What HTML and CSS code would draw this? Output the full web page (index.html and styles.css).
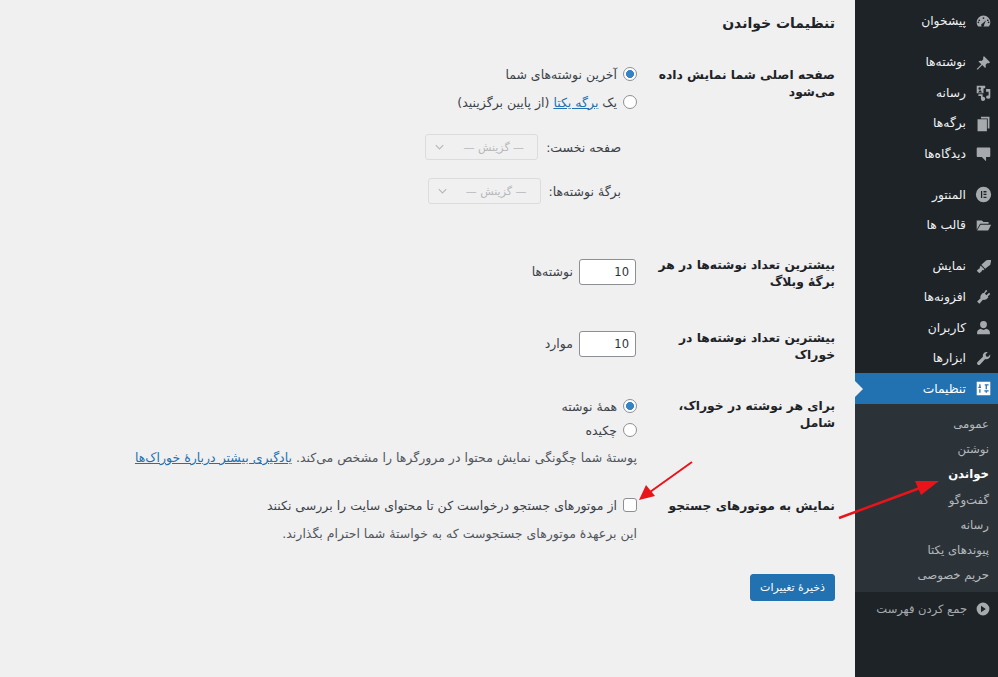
FILE: index.html
```html
<!DOCTYPE html>
<html lang="fa" dir="rtl">
<head>
<meta charset="utf-8">
<title>تنظیمات خواندن</title>
<link rel="stylesheet" href="styles.css">
</head>
<body>
<div class="admin">
  <nav class="side">
    <ul class="menu">
      <li class="item"><svg class="ic" viewBox="0 0 20 20"><path d="M10 3a8 8 0 0 0-8 8c0 2 .7 3.800 2 5h12c1.300-1.200 2-3 2-5a8 8 0 0 0-8-8zm0 2a1 1 0 1 1 0 2 1 1 0 0 1 0-2zM5 7.500a1 1 0 1 1 0 2 1 1 0 0 1 0-2zm10 0a1 1 0 1 1 0 2 1 1 0 0 1 0-2zM4 12a1 1 0 1 1 0-2 1 1 0 0 1 0 2zm12 0a1 1 0 1 1 0-2 1 1 0 0 1 0 2zm-5.200 1.600a1.800 1.800 0 1 1-2-1.200L13 8.500z"/></svg><span>پیشخوان</span></li>
      <li class="item gap"><svg class="ic" viewBox="0 0 20 20"><path d="M10.400 2.300 17.700 9.600 16.300 11c-.7-.3-1.500-.3-2.100 0l-1.800 1.800c.6 1.300.4 2.700-.5 3.700L8.600 13 3 18.500l-1-.9L7.500 12 4 8.700c1-.9 2.400-1.100 3.700-.5l1.800-1.800c.3-.6.300-1.400 0-2.100z"/></svg><span>نوشته‌ها</span></li>
      <li class="item"><svg class="ic" viewBox="0 0 20 20"><path d="M2 2h10v3h-2v6H2zm3.500 1.800a1.500 1.500 0 1 0 0 3 1.500 1.500 0 0 0 0-3zM3.500 10h5L6 7zM13 6h5v9.500a2.500 2 0 1 1-2-2V9h-3zM4 12h5v3a2.500 2.500 0 1 1-2 2.500V14H4z"/></svg><span>رسانه</span></li>
      <li class="item"><svg class="ic" viewBox="0 0 20 20"><path d="M7 2h10v14h-2V4H7zM3 5h11v14H3z"/></svg><span>برگه‌ها</span></li>
      <li class="item"><svg class="ic" viewBox="0 0 20 20"><path d="M3 3h14a1 1 0 0 1 1 1v9a1 1 0 0 1-1 1h-4v5l-5-5H3a1 1 0 0 1-1-1V4a1 1 0 0 1 1-1z"/></svg><span>دیدگاه‌ها</span></li>
      <li class="item gap"><svg class="ic" viewBox="0 0 20 20"><path fill-rule="evenodd" d="M10 1a9 9 0 1 0 0 18 9 9 0 0 0 0-18zM7 6h1.500v8H7zm3 0h3.500v1.500H10zm0 3.200h3.500v1.500H10zm0 3.300h3.500V14H10z"/></svg><span>المنتور</span></li>
      <li class="item"><svg class="ic" viewBox="0 0 20 20"><path d="M2 4h6l2 2h6v2H6l-4 7zM6.500 9H19l-3.500 7H2.500z"/></svg><span>قالب ها</span></li>
      <li class="item gap"><svg class="ic" viewBox="0 0 20 20"><path d="M19 2.500 18 8l-6 4.500L7.500 8 13 3c2-.6 4-.7 6-.5zM6.800 9l4.300 4.300-1.300 1.200-1.300-.5-.6 1.500L5.200 18l-3.200-3 2.500-2.500 1.500-.6-.5-1.300z"/></svg><span>نمایش</span></li>
      <li class="item"><svg class="ic" viewBox="0 0 20 20"><path d="M13 2l1.500 1.500-3 3 2 2 3-3L18 7l-3 3 .8.800-1.500 1.500c-1.500 1.500-3.500 2-5 1.500L6 17.500 5 18.500 2.500 16l4-4c-.5-1.500 0-3.500 1.500-5L9.500 5.500l.8.800z"/></svg><span>افزونه‌ها</span></li>
      <li class="item"><svg class="ic" viewBox="0 0 20 20"><path d="M10 2.500a4 4 0 0 1 4 4.200c0 2.300-1.800 4.300-4 4.300S6 9 6 6.700a4 4 0 0 1 4-4.200zM2.500 18v-2.500c0-2 2-3.300 4.500-4 1 1 2 1.300 3 1.300s2-.3 3-1.300c2.500.7 4.500 2 4.500 4V18z"/></svg><span>کاربران</span></li>
      <li class="item"><svg class="ic" viewBox="0 0 20 20"><path d="M18 6.500a4.500 4.500 0 0 1-6 4.200L6 17a2 2 0 0 1-3-3l6.300-6a4.500 4.500 0 0 1 5.700-5.500L12.500 5l.5 2.500 2.500.5L17.800 5.300c.1.400.2.800.2 1.200z"/></svg><span>ابزارها</span></li>
      <li class="item active"><svg class="ic" viewBox="0 0 20 20"><path fill-rule="evenodd" d="M2 2h16v16H2zM5 5v3H4v1.500h3V8H6.500V5zm6.500 0v1.500h1V11h1.500V6.500h2V5zM5 11v4h1.500v-4zm6 1v1.500h1.500V15H14v-1.500h2V12z"/></svg><span>تنظیمات</span></li>
    </ul>
    <ul class="sub">
      <li>عمومی</li>
      <li>نوشتن</li>
      <li class="on">خواندن</li>
      <li>گفت‌وگو</li>
      <li>رسانه</li>
      <li>پیوندهای یکتا</li>
      <li>حریم خصوصی</li>
    </ul>
    <div class="collapse"><svg class="ic" viewBox="0 0 20 20"><path fill-rule="evenodd" d="M10 2a8 8 0 1 0 0 16 8 8 0 0 0 0-16zM7.500 6l6 4-6 4z"/></svg><span>جمع کردن فهرست</span></div>
  </nav>
  <main class="main">
    <h1 class="title">تنظیمات خواندن</h1>
    <form class="form">
      <div class="row r1">
        <div class="th">صفحه اصلی شما نمایش داده می‌شود</div>
        <div class="td">
          <label class="opt"><input class="radio" type="radio" name="a" checked><span>آخرین نوشته‌های شما</span></label>
          <label class="opt"><input class="radio" type="radio" name="a"><span>یک <a href="#">برگه یکتا</a> (از پایین برگزینید)</span></label>
          <div class="picks">
            <div class="pick"><span>صفحه نخست:</span><div class="select"><span>— گزینش —</span><svg class="chev" viewBox="0 0 12 8"><path d="M1 1.500 6 6.500 11 1.500"/></svg></div></div>
            <div class="pick"><span>برگهٔ نوشته‌ها:</span><div class="select"><span>— گزینش —</span><svg class="chev" viewBox="0 0 12 8"><path d="M1 1.500 6 6.500 11 1.500"/></svg></div></div>
          </div>
        </div>
      </div>
      <div class="row r2">
        <div class="th">بیشترین تعداد نوشته‌ها در هر برگهٔ وبلاگ</div>
        <div class="td inl"><input class="num" type="text" value="10" dir="ltr"><span>نوشته‌ها</span></div>
      </div>
      <div class="row r3">
        <div class="th">بیشترین تعداد نوشته‌ها در خوراک</div>
        <div class="td inl"><input class="num" type="text" value="10" dir="ltr"><span>موارد</span></div>
      </div>
      <div class="row r4">
        <div class="th">برای هر نوشته در خوراک، شامل</div>
        <div class="td">
          <label class="opt tight"><input class="radio" type="radio" name="b" checked><span>همهٔ نوشته</span></label>
          <label class="opt tight"><input class="radio" type="radio" name="b"><span>چکیده</span></label>
          <p class="desc">پوستهٔ شما چگونگی نمایش محتوا در مرورگرها را مشخص می‌کند. <a href="#">یادگیری بیشتر دربارهٔ خوراک‌ها</a></p>
        </div>
      </div>
      <div class="row r5">
        <div class="th">نمایش به موتورهای جستجو</div>
        <div class="td">
          <label class="opt"><input class="check" type="checkbox"><span>از موتورهای جستجو درخواست کن تا محتوای سایت را بررسی نکنند</span></label>
          <p class="desc note">این برعهدهٔ موتورهای جستجوست که به خواستهٔ شما احترام بگذارند.</p>
        </div>
      </div>
      <button class="save" type="button">ذخیرهٔ تغییرات</button>
    </form>
  </main>
</div>
<svg class="arrows" viewBox="0 0 998 677">
  <path class="shaft" d="M692 462 650 492"/>
  <path class="head" d="M639 500 646 485 655 496z"/>
  <path class="shaft thick" d="M839 518 920 488"/>
  <path class="head" d="M939 481 915 481 921 495z"/>
</svg>
</body>
</html>
```
FILE: styles.css
```css
* { box-sizing: border-box; }
html, body { margin: 0; height: 100%; }
body {
  background: #f0f0f1;
  color: #3c434a;
  font-family: "DejaVu Sans", "Noto Sans", sans-serif;
  font-size: 12.500px;
  overflow: hidden;
  position: relative;
}
.admin { display: flex; height: 677px; }
ul { list-style: none; margin: 0; padding: 0; }

.side {
  width: 143px;
  flex: none;
  background: #1d2327;
  color: #f0f0f1;
  padding-top: 6px;
}
.item {
  height: 30.600px;
  display: flex;
  align-items: center;
  gap: 9px;
  padding-right: 6px;
  font-size: 12.300px;
}
.item.gap { margin-top: 10.300px; }
.ic { width: 17px; height: 17px; fill: #a7aaad; flex: none; }
.item.active {
  background: #2271b1;
  color: #fff;
  position: relative;
}
.item.active .ic { fill: #fff; }
.item.active::after {
  content: "";
  position: absolute;
  left: 0;
  top: 8px;
  border: 8px solid transparent;
  border-left-color: #f0f0f1;
  border-right-width: 0;
}
.sub {
  background: #2c3338;
  padding: 7px 0 3px;
  height: 188px;
}
.sub li {
  height: 25.300px;
  display: flex;
  align-items: center;
  padding-right: 9px;
  color: #b4b9be;
  font-size: 11.700px;
}
.sub li.on { color: #fff; font-weight: 700; }
.collapse {
  display: flex;
  align-items: center;
  gap: 8px;
  padding: 9px 7px 0 0;
  color: #a7aaad;
  font-size: 11.500px;
}
.collapse .ic { width: 16px; height: 16px; }

.main { flex: 1; padding: 13px 20px 0 0; }
.title {
  margin: 0 0 31px;
  font-size: 14px;
  line-height: 20px;
  font-weight: 700;
  color: #1d2327;
}
.row { display: flex; }
.th {
  width: 198px;
  flex: none;
  padding-left: 20px;
  font-weight: 700;
  font-size: 12.300px;
  line-height: 16.500px;
  color: #1d2327;
}
.r1 { height: 187px; padding-top: 3px; }
.r2 { height: 73px; padding-top: 6px; }
.r3 { height: 69px; padding-top: 6px; }
.r4 { height: 100px; padding-top: 5px; }
.r5 { height: 81px; padding-top: 5px; }
.r2 .td { padding-top: 2px; }
.r3 .td { padding-top: 1px; }
.r4 .td { padding-top: 3px; }
.td { flex: 1; min-width: 0; }
.opt {
  display: flex;
  align-items: center;
  gap: 6px;
  height: 28px;
  margin-top: -7px;
}
.opt + .opt { margin-top: 0; }
a { color: #2271b1; text-decoration: underline; }
.radio, .check {
  appearance: none;
  width: 14px;
  height: 14px;
  margin: 0;
  background: #fff;
  border: 1px solid #8c8f94;
  flex: none;
}
.radio { border-radius: 50%; }
.radio:checked { background: radial-gradient(circle, #3582c4 0 3.700px, #fff 4.300px); }
.check { border-radius: 3px; }
.opt.tight { height: 24px; }
.picks { padding: 18px 16px 0 0; display: flex; flex-direction: column; gap: 18px; }
.pick { display: flex; align-items: center; gap: 8px; }
.select {
  width: 113px;
  height: 26px;
  border: 1px solid #dcdcde;
  border-radius: 3px;
  background: #f0f0f1;
  color: #b5b7ba;
  display: flex;
  align-items: center;
  justify-content: space-between;
  padding: 0 13px 0 9px;
  font-size: 11px;
}
.chev { width: 9px; height: 6px; fill: none; stroke: #b5b7ba; stroke-width: 1.500; }
.inl { display: flex; align-items: flex-start; gap: 6px; line-height: 26px; }
.num {
  width: 57px;
  height: 26px;
  border: 1px solid #8c8f94;
  border-radius: 3px;
  background: #fff;
  padding: 0 6px;
  margin: 0 1px 0 0;
  font: 11.500px "DejaVu Sans", sans-serif;
  color: #2c3338;
  text-align: right;
}
.desc { margin: 8px 0 0; color: #50575e; white-space: nowrap; }
.note { margin-top: 3px; line-height: 24px; }
.save {
  display: block;
  width: 85px;
  height: 27px;
  margin: 0;
  background: #2271b1;
  border: 1px solid #2271b1;
  border-radius: 3px;
  color: #fff;
  font: 11px "DejaVu Sans", sans-serif;
  padding: 0;
}
.arrows { position: absolute; inset: 0; width: 998px; height: 677px; pointer-events: none; }
.shaft { stroke: #e8141a; stroke-width: 2; fill: none; }
.thick { stroke-width: 2.500; }
.head { fill: #e8141a; }
```
